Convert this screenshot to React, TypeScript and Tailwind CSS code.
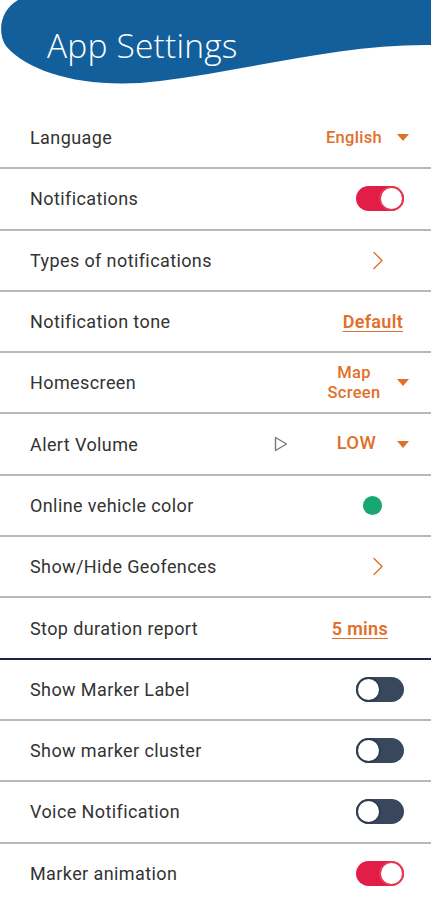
type Row = {
  label: string;
  kind: 'select' | 'toggle' | 'chevron' | 'link' | 'volume' | 'dot';
  value?: string;
  on?: boolean;
};

const rows: Row[] = [
  { label: 'Language', kind: 'select', value: 'English' },
  { label: 'Notifications', kind: 'toggle', on: true },
  { label: 'Types of notifications', kind: 'chevron' },
  { label: 'Notification tone', kind: 'link', value: 'Default' },
  { label: 'Homescreen', kind: 'select', value: 'Map Screen' },
  { label: 'Alert Volume', kind: 'volume', value: 'LOW' },
  { label: 'Online vehicle color', kind: 'dot' },
  { label: 'Show/Hide Geofences', kind: 'chevron' },
  { label: 'Stop duration report', kind: 'link', value: '5 mins' },
  { label: 'Show Marker Label', kind: 'toggle', on: false },
  { label: 'Show marker cluster', kind: 'toggle', on: false },
  { label: 'Voice Notification', kind: 'toggle', on: false },
  { label: 'Marker animation', kind: 'toggle', on: true },
];

const Caret = () => (
  <svg width="12" height="7" viewBox="0 0 12 7" className="shrink-0">
    <path d="M0 0 L12 0 L6 7 Z" fill="#e0702a" />
  </svg>
);

const Chevron = () => (
  <svg width="12" height="19" viewBox="0 0 12 19">
    <path d="M2 1.5 L10 9.5 L2 17.5" fill="none" stroke="#e0702a" strokeWidth="1.4" strokeLinecap="round" strokeLinejoin="round" />
  </svg>
);

const Toggle = ({ on }: { on?: boolean }) => (
  <div
    className={`w-[48px] h-[25px] rounded-full flex items-center ${on ? 'bg-[#e11d48] justify-end' : 'bg-[#38475c] justify-start'}`}
  >
    <div
      className={`w-[25px] h-[25px] rounded-full bg-white border-2 ${on ? 'border-[#e8384f]' : 'border-[#2f3d52]'}`}
    />
  </div>
);

const RightSide = ({ row }: { row: Row }) => {
  switch (row.kind) {
    case 'select':
      return (
        <div className="flex items-center gap-[14px] mr-[-6px]">
          <span className="text-[16.5px] font-medium text-[#e0702a] text-center leading-[20px] w-[58px] whitespace-pre-line tracking-[0.3px]">
            {row.value === 'Map Screen' ? 'Map\nScreen' : row.value}
          </span>
          <Caret />
        </div>
      );
    case 'toggle':
      return (
        <div className="mr-[-1px]">
          <Toggle on={row.on} />
        </div>
      );
    case 'chevron':
      return (
        <div className="mr-[19px]">
          <Chevron />
        </div>
      );
    case 'link':
      return (
        <span
          className={`text-[18px] font-semibold text-[#e0702a] underline underline-offset-[3px] tracking-[0.3px] ${row.value === '5 mins' ? 'mr-[15px]' : ''}`}
        >
          {row.value}
        </span>
      );
    case 'volume':
      return (
        <div className="flex items-center mr-[-6px]">
          <svg width="14" height="16" viewBox="0 0 14 16" className="mr-[49px]">
            <path d="M1.5 1.5 L12.5 8 L1.5 14.5 Z" fill="none" stroke="#777" strokeWidth="1.4" strokeLinejoin="round" />
          </svg>
          <span className="text-[18.5px] font-medium text-[#e0702a] mr-[21px] tracking-[0.3px]">{row.value}</span>
          <Caret />
        </div>
      );
    case 'dot':
      return <div className="w-[19px] h-[19px] rounded-full bg-[#16a870] mr-[21px]" />;
  }
};

export default function App() {
  return (
    <div className="w-[431px] h-[900px] bg-white overflow-hidden" style={{ fontFamily: 'Roboto, "Liberation Sans", sans-serif' }}>
      <div className="relative h-[107px]">
        <svg className="absolute inset-0" width="431" height="107" viewBox="0 0 431 107">
          <path
            d="M18 0 L431 0 L431 45 C 340 44, 250 70, 160 81 C 90 90, 30 74, 6 46 C -3 33, 0 10, 18 0 Z"
            fill="#135f9c"
          />
        </svg>
        <h1
          className="relative pl-[47px] pt-[25px] text-[33.5px] font-light text-white leading-[40px] tracking-[0.2px]"
          style={{ fontFamily: '"Open Sans", sans-serif' }}
        >
          App Settings
        </h1>
      </div>
      <div className="border-t-2 border-transparent mt-[-1px]">
        {rows.map((row) => (
          <div
            key={row.label}
            className={`h-[61.3px] border-b-2 flex items-center justify-between pl-[30px] pr-[28px] ${row.label === 'Stop duration report' ? 'border-[#1e2446]' : 'border-[#b8b8b8]'}`}
          >
            <span className="text-[18px] text-[#333] tracking-[0.4px]">{row.label}</span>
            <RightSide row={row} />
          </div>
        ))}
      </div>
    </div>
  );
}
